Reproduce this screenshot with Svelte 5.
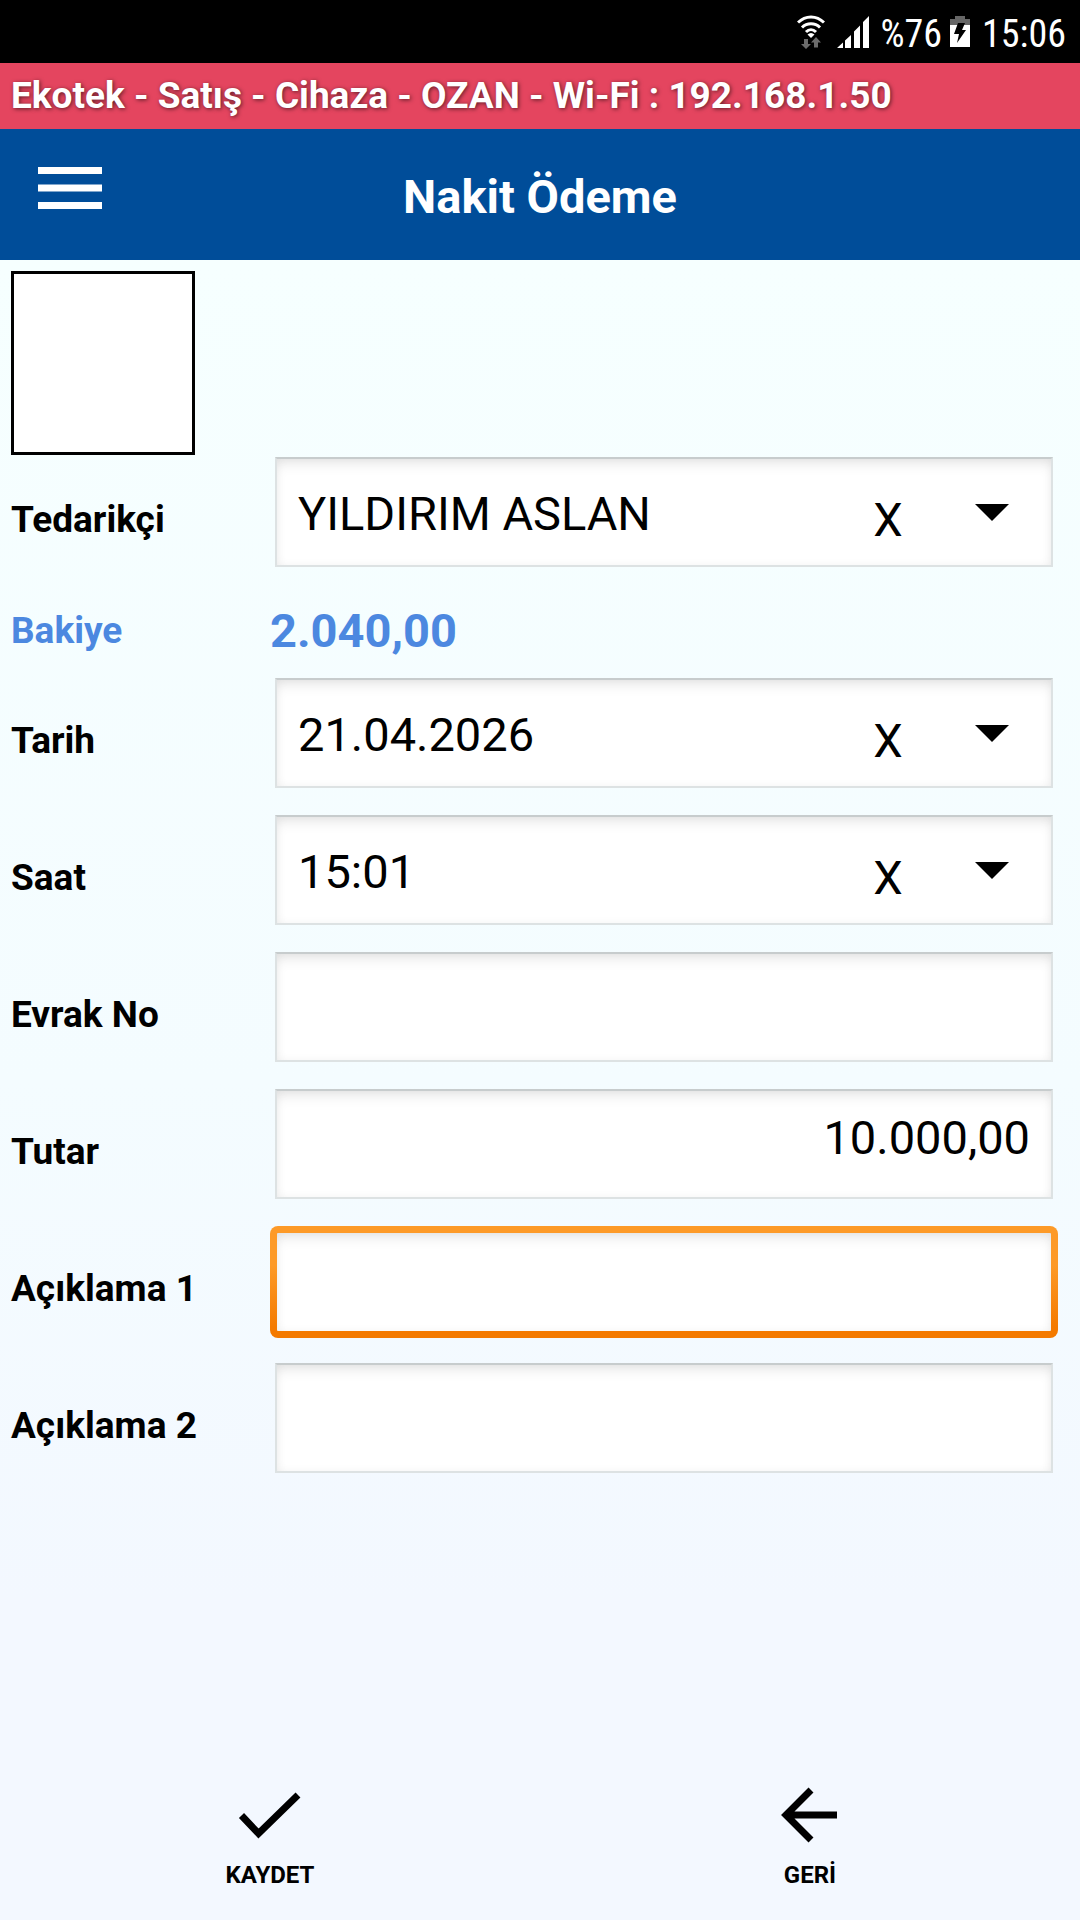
<script lang="ts">
	let supplier = $state('YILDIRIM ASLAN');
	let date = $state('21.04.2026');
	let time = $state('15:01');
	let documentNo = $state('');
	let amount = $state('10.000,00');
	let note1 = $state('');
	let note2 = $state('');
</script>

{#snippet arrow()}
	<svg class="arrow" viewBox="0 0 34 17" aria-hidden="true"><path d="M0 0h34L17 17z" /></svg>
{/snippet}

<div class="screen">
	<div class="status">
		<svg class="wifi" viewBox="0 0 28 34" aria-hidden="true">
			<g fill="none" stroke="#fff" stroke-width="3">
				<path d="M1 7.5C8.500 0 19.500 0 27 7.500" />
				<path d="M5 12.500C10 7.500 18 7.500 23 12.500" />
				<path d="M9 17C12 14 16 14 19 17" />
			</g>
			<path fill="#fff" d="M10.500 19.500Q14 16.500 17.500 19.500L14 23z" />
			<path fill="#6b6b6b" d="M7 24h4v5h3l-5 5-5-5h3zM17 32.500h4v-5h3l-5-5.500-5 5.500h3z" />
		</svg>
		<svg class="signal" viewBox="0 0 32 32" aria-hidden="true">
			<path fill="#fff" d="M0 32L6 26.500V32zM8 24.500L14 19V32H8zM17 15.500L23 9.500V32H17zM26 6L32 0V32H26z" />
		</svg>
		<span>%76</span>
		<svg class="battery" viewBox="0 0 20 31" aria-hidden="true">
			<path fill="#666" d="M5 0h10v3h5v7H0V3h5z" />
			<path fill="#fff" d="M0 9h20v22H0z" />
			<path fill="#000" d="M8 7h7l-3 7h4L7 27l2-9H4z" />
		</svg>
		<span>15:06</span>
	</div>

	<div class="connection">Ekotek - Satış - Cihaza - OZAN - Wi-Fi : 192.168.1.50</div>

	<header>
		<button class="menu" aria-label="Menü">
			<svg viewBox="0 0 64 42" aria-hidden="true">
				<path fill="#fff" d="M0 0h64v7H0zM0 17.500h64v7H0zM0 35h64v7H0z" />
			</svg>
		</button>
		<h1>Nakit Ödeme</h1>
	</header>

	<form>
		<div class="photo"></div>

		<div class="row">
			<label for="supplier">Tedarikçi</label>
			<div class="field">
				<select id="supplier" bind:value={supplier}>
					<option>YILDIRIM ASLAN</option>
				</select>
				<button type="button" class="clear" onclick={() => (supplier = '')}>X</button>
				{@render arrow()}
			</div>
		</div>

		<div class="balance">
			<span>Bakiye</span>
			<strong>2.040,00</strong>
		</div>

		<div class="row">
			<label for="date">Tarih</label>
			<div class="field">
				<select id="date" bind:value={date}>
					<option>21.04.2026</option>
				</select>
				<button type="button" class="clear" onclick={() => (date = '')}>X</button>
				{@render arrow()}
			</div>
		</div>

		<div class="row">
			<label for="time">Saat</label>
			<div class="field">
				<select id="time" bind:value={time}>
					<option>15:01</option>
				</select>
				<button type="button" class="clear" onclick={() => (time = '')}>X</button>
				{@render arrow()}
			</div>
		</div>

		<div class="row">
			<label for="document">Evrak No</label>
			<div class="field"><input id="document" type="text" bind:value={documentNo} /></div>
		</div>

		<div class="row">
			<label for="amount">Tutar</label>
			<div class="field">
				<input id="amount" class="amount" type="text" inputmode="decimal" bind:value={amount} />
			</div>
		</div>

		<div class="row">
			<label for="note1">Açıklama 1</label>
			<div class="field active"><input id="note1" type="text" bind:value={note1} /></div>
		</div>

		<div class="row">
			<label for="note2">Açıklama 2</label>
			<div class="field"><input id="note2" type="text" bind:value={note2} /></div>
		</div>
	</form>

	<footer>
		<button>
			<svg viewBox="0 0 64 56" aria-hidden="true">
				<path fill="none" stroke="#000" stroke-width="7" d="M3.500 28.500L20.500 46.500L60 8" />
			</svg>
			KAYDET
		</button>
		<button>
			<svg viewBox="0 0 64 56" aria-hidden="true">
				<path fill="none" stroke="#000" stroke-width="7" d="M33 3L8 28L33 53M8 28H59" />
			</svg>
			GERİ
		</button>
	</footer>
</div>

<style>
	:global(body) {
		margin: 0;
	}

	.screen {
		min-height: 100vh;
		display: flex;
		flex-direction: column;
		font-family: Roboto, 'Liberation Sans', sans-serif;
		color: #000;
		background: linear-gradient(#f6ffff 260px, #f4fcff 1080px, #f3f8ff 1600px);
	}

	button,
	input,
	select {
		font: inherit;
		color: inherit;
		background: none;
		border: none;
		padding: 0;
		margin: 0;
		outline: none;
	}

	button {
		cursor: pointer;
	}

	svg {
		display: block;
		flex: none;
	}

	.status {
		height: 63px;
		padding: 0 14px;
		display: flex;
		align-items: center;
		justify-content: flex-end;
		gap: 8px;
		background: #000;
		color: #fff;
		font-family: 'Roboto Condensed', Roboto, sans-serif;
		font-size: 38px;
	}

	.status svg {
		margin-right: 4px;
	}

	.status span {
		padding-top: 4px;
	}

	.wifi {
		width: 28px;
		height: 34px;
	}

	.signal {
		width: 32px;
		height: 32px;
	}

	.battery {
		width: 20px;
		height: 31px;
	}

	.connection {
		padding: 0 11px;
		background: #e4455f;
		color: #fff;
		font-size: 37px;
		font-weight: 700;
		line-height: 66px;
		text-shadow: 1px 1px 4px rgba(0, 0, 0, 0.6);
	}

	header {
		min-height: 131px;
		display: grid;
		grid-template-columns: 140px 1fr 140px;
		align-items: center;
		background: #004d99;
		color: #fff;
	}

	.menu {
		padding: 0 38px 14px;
	}

	.menu svg {
		width: 64px;
		height: 42px;
	}

	h1 {
		margin: 0;
		padding-top: 5px;
		text-align: center;
		font-size: 47px;
		font-weight: 700;
		line-height: 56px;
	}

	form {
		padding: 11px 22px 0 11px;
	}

	.photo {
		width: 178px;
		height: 178px;
		margin-bottom: 2px;
		border: 3px solid #000;
		background: #fff;
	}

	.row,
	.balance {
		display: grid;
		grid-template-columns: 259px 1fr;
		align-items: center;
		font-size: 37px;
		line-height: 42px;
	}

	.row {
		margin-bottom: 27px;
	}

	label {
		padding-top: 16px;
		font-weight: 700;
	}

	.balance {
		height: 74px;
		padding-bottom: 10px;
		color: #4c88e0;
		font-weight: 700;
	}

	.balance strong {
		font-size: 47px;
		font-weight: 700;
		line-height: 56px;
	}

	.field {
		box-sizing: border-box;
		height: 110px;
		margin: 0 5px;
		display: flex;
		align-items: center;
		border: 2px solid #dde2e3;
		border-top-color: #c7cccd;
		background: #fff;
		box-shadow:
			inset 0 8px 14px -4px rgba(0, 0, 0, 0.1),
			inset 0 0 8px rgba(0, 0, 0, 0.05);
		font-size: 47px;
		line-height: 56px;
	}

	.field.active {
		height: 112px;
		margin: 0 0 -2px;
		border: 7px solid transparent;
		border-radius: 8px;
		background:
			linear-gradient(#fff, #fff) padding-box,
			linear-gradient(#fd9a28 35%, #f47a00 90%) border-box;
	}

	select,
	input {
		flex: 1;
		min-width: 0;
		height: 100%;
		box-sizing: border-box;
		padding: 4px 21px 0;
		appearance: none;
	}

	.amount {
		padding-top: 0;
		padding-bottom: 13px;
		text-align: right;
	}

	.clear {
		width: 60px;
		padding-top: 15px;
		text-align: center;
	}

	.arrow {
		width: 34px;
		height: 17px;
		margin: 0 42px 0 57px;
	}

	footer {
		margin-top: auto;
		padding-bottom: 31px;
		display: grid;
		grid-template-columns: 1fr 1fr;
	}

	footer button {
		display: flex;
		flex-direction: column;
		align-items: center;
		gap: 18px;
		font-size: 24px;
		font-weight: 700;
		line-height: 28px;
	}

	footer svg {
		width: 64px;
		height: 56px;
	}
</style>
